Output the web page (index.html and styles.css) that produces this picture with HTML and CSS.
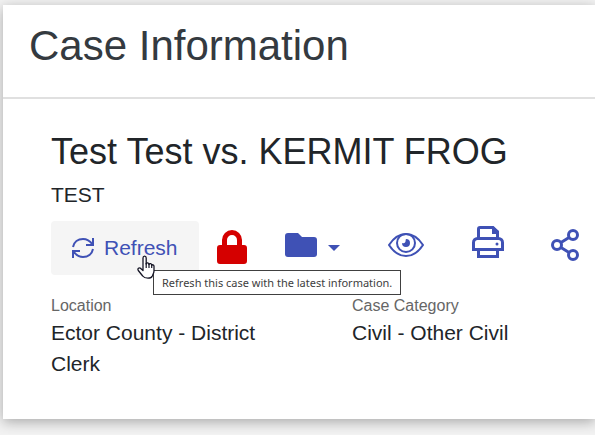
FILE: index.html
```html
<!DOCTYPE html>
<html lang="en">
<head>
<meta charset="utf-8">
<title>Case Information</title>
<link rel="stylesheet" href="styles.css">
</head>
<body>
<main class="card">
  <header class="card-header"><h1>Case Information</h1></header>
  <section class="card-body">
    <h2>Test Test vs. KERMIT FROG</h2>
    <p class="case-number">TEST</p>
    <div class="toolbar">
      <div class="refresh-wrap">
        <button class="refresh" type="button" aria-describedby="refresh-tip">
          <svg width="24" height="24" viewBox="0 0 24 24" fill="none" stroke="currentColor" stroke-width="2" aria-hidden="true">
            <path d="M22 2v7h-7M2 22v-7h7M2 11C3 6 7 3 12 3c4 0 7 2 9.500 5.500M22 13c-1 5-5 8-10 8-4 0-7-2-9.500-5.500"/>
          </svg>
          <span>Refresh</span>
        </button>
        <svg class="pointer" width="18" height="24" viewBox="0 0 18 24" aria-hidden="true">
          <path d="M6 14V3c0-2.600 3.200-2.600 3.200 0v6c.3-1.600 2.800-1.400 2.800.5.500-1.300 2.700-1 2.700.8.600-1 2.300-.6 2.300 1V16c0 2-1.200 3.500-1.700 5-.6 1.600-2 2.200-4.300 2.200-2.700 0-4.200-.6-5.300-2.200L1.300 15.500C.2 13.600 2 12.200 3.700 13.400L6 15.500z" fill="#fff" stroke="#151525" stroke-width="1.300" stroke-linejoin="round"/>
          <path d="M9.200 8v5M12 9v4M14.700 10v3" stroke="#151525" stroke-width="1.200"/>
        </svg>
        <div class="tooltip" id="refresh-tip" role="tooltip">Refresh this case with the latest information.</div>
      </div>
      <button class="icon-button lock" type="button" aria-label="Restricted case">
        <svg width="30" height="34" viewBox="0 0 30 34" aria-hidden="true">
          <path fill="currentColor" fill-rule="evenodd" d="M5 15V10a10 10 0 0 1 20 0v5h2a3 3 0 0 1 3 3v13a3 3 0 0 1-3 3H3a3 3 0 0 1-3-3V18a3 3 0 0 1 3-3zM10 15h10v-5a5 5 0 0 0-10 0z"/>
        </svg>
      </button>
      <button class="icon-button folder" type="button" aria-label="Folders">
        <svg width="32" height="24" viewBox="0 0 32 24" aria-hidden="true">
          <path fill="currentColor" d="M3 0h10l4 4h12a3 3 0 0 1 3 3v14a3 3 0 0 1-3 3H3a3 3 0 0 1-3-3V3a3 3 0 0 1 3-3z"/>
        </svg>
        <svg class="caret" width="12" height="6" viewBox="0 0 12 6" aria-hidden="true"><path fill="currentColor" d="M0 0h12L6 6z"/></svg>
      </button>
      <button class="icon-button eye" type="button" aria-label="Watch case">
        <svg width="36" height="24" viewBox="0 0 36 24" fill="none" stroke="currentColor" stroke-width="2" aria-hidden="true">
          <path d="M1 12C5.500 5 11 1 18 1s12.500 4 17 11c-4.500 7-10 11-17 11S5.500 19 1 12z"/>
          <circle cx="18" cy="10" r="9"/>
          <path fill="currentColor" stroke="none" d="M18 6a4 4 0 1 1-4 4c1.500.6 2.600.2 3.200-.7.600-.8.200-2.200.8-3.300z"/>
        </svg>
      </button>
      <button class="icon-button print" type="button" aria-label="Print">
        <svg width="32" height="32" viewBox="0 0 32 32" fill="none" stroke="currentColor" stroke-width="3" aria-hidden="true">
          <path d="M6.500 12V3a1.500 1.500 0 0 1 1.500-1.500h13l4.500 4.500v6M6.500 24v6.500h19V24"/>
          <path d="M20 1h2l5 4v3h-7z" fill="currentColor" stroke="none"/>
          <path d="M1.500 25V16.500a4 4 0 0 1 4-4h21a4 4 0 0 1 4 4V25M1 23.500h30"/>
          <circle cx="25" cy="18" r="1.500" fill="currentColor" stroke="none"/>
        </svg>
      </button>
      <button class="icon-button share" type="button" aria-label="Share">
        <svg width="28" height="32" viewBox="0 0 28 32" fill="none" stroke="currentColor" stroke-width="3" aria-hidden="true">
          <circle cx="6" cy="16" r="4.500"/><circle cx="22" cy="6" r="4.500"/><circle cx="22" cy="26" r="4.500"/>
          <path d="M10 13.500l8-5M10 18.500l8 5"/>
        </svg>
      </button>
    </div>
    <dl class="details">
      <div><dt>Location</dt><dd>Ector County - District Clerk</dd></div>
      <div><dt>Case Category</dt><dd>Civil - Other Civil</dd></div>
    </dl>
  </section>
</main>
</body>
</html>
```
FILE: styles.css
```css
* { box-sizing: border-box; }

body {
  margin: 0;
  padding: 5px 0 15px 3px;
  background: #f2f2f2;
  color: #212529;
  font-family: "Liberation Sans", Arial, sans-serif;
  overflow-x: hidden;
}

h1, h2, p, dl, dd { margin: 0; font-weight: 400; }

.card {
  background: #fff;
  box-shadow: 0 3px 12px rgba(0, 0, 0, 0.3);
}

.card-header {
  padding: 17px 26px 27px;
  border-bottom: 2px solid #e0e0e0;
}

h1 {
  color: #343a40;
  font-size: 42px;
  line-height: 48px;
}

.card-body { padding: 32px 0 40px 48px; }

h2 {
  font-size: 36px;
  line-height: 42px;
}

.case-number {
  margin-top: 6px;
  font-size: 21px;
  line-height: 32px;
}

.toolbar {
  display: flex;
  align-items: center;
  margin-top: 10px;
}

.refresh-wrap { position: relative; }

button {
  display: flex;
  align-items: center;
  flex: none;
  padding: 0;
  border: 0;
  background: none;
  color: #3f51b5;
  font: inherit;
  cursor: pointer;
}

.refresh {
  gap: 9px;
  height: 54px;
  padding: 0 21px 0 20px;
  border-radius: 4px;
  background: #f5f5f5;
  font-size: 21px;
}

.icon-button { padding-bottom: 6px; }

.pointer {
  position: absolute;
  z-index: 2;
  top: 34px;
  left: 86px;
}

.tooltip {
  position: absolute;
  z-index: 1;
  top: 49px;
  left: 102px;
  padding: 0 8px;
  border: 1px solid #404040;
  background: #fff;
  color: #404040;
  font-family: "Noto Sans", "Segoe UI", sans-serif;
  font-size: 11px;
  line-height: 23px;
  white-space: nowrap;
}

.lock {
  margin-left: 18px;
  padding-bottom: 2px;
  color: #d50000;
}

.folder {
  gap: 11px;
  margin-left: 38px;
}

.caret { margin-top: 6px; }

.eye,
.print { margin-left: 48px; }

.print { padding-bottom: 12px; }

.share { margin-left: 47px; }

.details {
  display: grid;
  grid-template-columns: 241px 1fr;
  column-gap: 60px;
  margin-top: 19px;
}

dt {
  color: #666;
  font-size: 16px;
  line-height: 23px;
}

dd {
  font-size: 21px;
  line-height: 31px;
}
```
